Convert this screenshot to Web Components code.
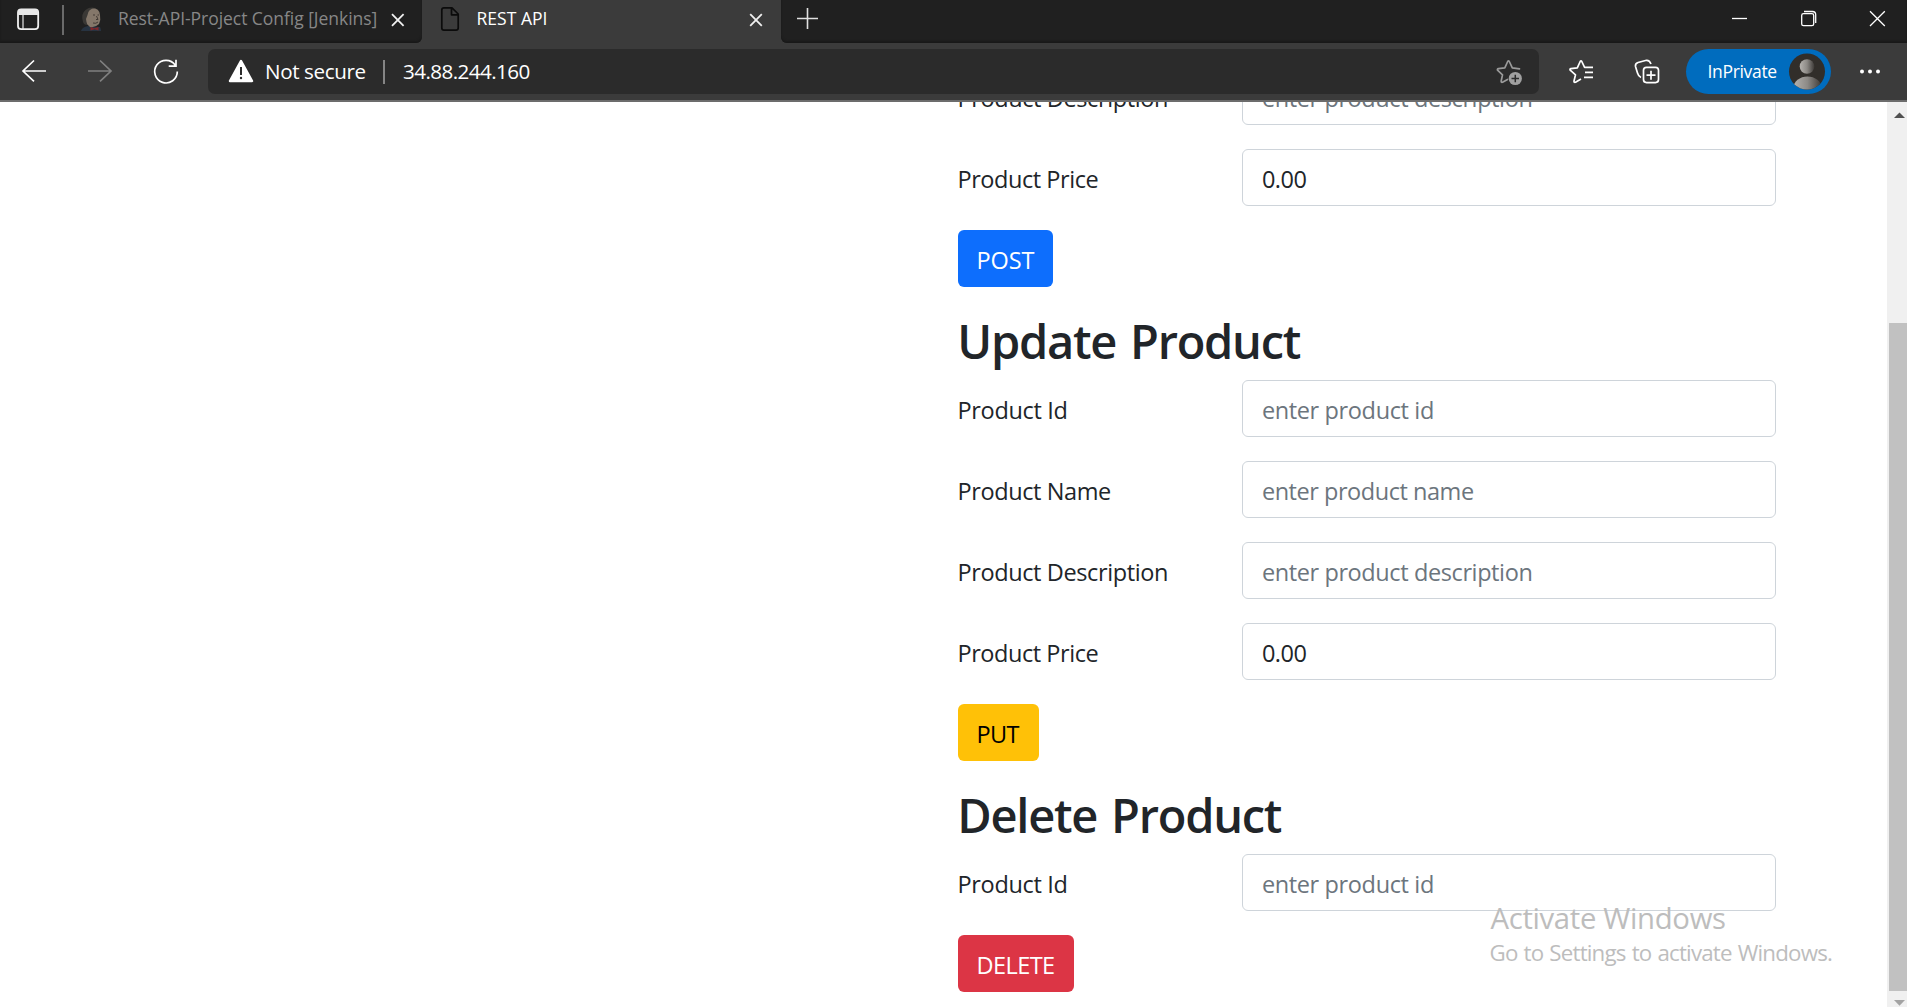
<!DOCTYPE html>
<html lang="en">
<head>
<meta charset="utf-8">
<title>REST API</title>
<style>
  html, body { margin: 0; height: 100%; overflow: hidden; }
  body { font-family: "Open Sans", "Noto Sans", sans-serif; background: #fff; color: #212529; }
</style>
</head>
<body>
<browser-window>
  <browser-tabs slot="tabs"></browser-tabs>
  <browser-toolbar slot="toolbar"></browser-toolbar>
  <product-page>
    <form-row label="Product Description" lw="207.5" value="enter product description" vw="268.5" hint></form-row>
    <form-row label="Product Price" lw="138" value="0.00" vw="43.5"></form-row>
    <action-button label="POST" lw="56" style="--bg:#0d6efd;--fg:#fff;--w:95px"></action-button>
    <section-title label="Update Product" lw="339.5"></section-title>
    <form-row label="Product Id" lw="107" value="enter product id" vw="170" hint></form-row>
    <form-row label="Product Name" lw="150.5" value="enter product name" vw="210" hint></form-row>
    <form-row label="Product Description" lw="207.5" value="enter product description" vw="268.5" hint></form-row>
    <form-row label="Product Price" lw="138" value="0.00" vw="43.5"></form-row>
    <action-button label="PUT" lw="41" style="--bg:#ffc107;--fg:#000;--w:81px"></action-button>
    <section-title label="Delete Product" lw="320.5"></section-title>
    <form-row label="Product Id" lw="107" value="enter product id" vw="170" hint></form-row>
    <action-button label="DELETE" lw="75.5" style="--bg:#dc3545;--fg:#fff;--w:116px"></action-button>
  </product-page>
  <scroll-bar slot="scroll"></scroll-bar>
  <activation-note slot="note"></activation-note>
</browser-window>

<script>
const pen = document.createElement('canvas').getContext('2d');

function define(name, html, setup) {
  customElements.define(name, class extends HTMLElement {
    connectedCallback() {
      if (this.shadowRoot) return;
      const root = this.attachShadow({ mode: 'open' });
      root.innerHTML = typeof html === 'function' ? html(this) : html;
      if (setup) setup(this, root);
    }
  });
}

/* A single line of text whose tracking is set so its glyphs span `ink` pixels;
   `space` widens each word gap by that many pixels. */
define('fit-text', el => `
  <style>:host{display:block;flex:none;font-kerning:none}span{display:block;white-space:pre}</style>
  <span>${el.getAttribute('text')}</span>`, (el, root) => {
  const span = root.querySelector('span');
  const cs = getComputedStyle(el);
  const ink = parseFloat(el.getAttribute('ink'));
  const space = parseFloat(el.getAttribute('space') || 0);
  const text = el.getAttribute('text');
  pen.font = `${cs.fontWeight} ${cs.fontSize} ${cs.fontFamily}`;
  pen.fontKerning = 'none';
  const m = pen.measureText(text);
  const natural = m.actualBoundingBoxRight + m.actualBoundingBoxLeft + space * (text.split(' ').length - 1);
  span.style.letterSpacing = ((ink - natural) / (text.length - 1)).toFixed(3) + 'px';
  span.style.wordSpacing = space + 'px';
  span.style.marginLeft = m.actualBoundingBoxLeft.toFixed(2) + 'px';
  el.style.width = ink + 'px';
});

define('form-row', el => `
  <style>
    :host{display:grid;grid-template-columns:284px 534px;height:57px;margin-bottom:24px;font-size:23.5px;line-height:36px}
    .label{display:flex;align-items:center;padding:2px 0 0 1.5px}
    .field{display:flex;align-items:center;box-sizing:border-box;border:1px solid #ced4da;border-radius:6px;padding:2px 0 0 19.9px;background:#fff}
    .hint{color:#6c757d}
  </style>
  <div class="label"><fit-text text="${el.getAttribute('label')}" ink="${el.getAttribute('lw')}"></fit-text></div>
  <div class="field ${el.hasAttribute('hint') ? 'hint' : ''}"><fit-text text="${el.getAttribute('value')}" ink="${el.getAttribute('vw')}"></fit-text></div>`);

define('action-button', el => `
  <style>
    :host{display:block;margin-bottom:24px}
    button{all:unset;display:flex;align-items:center;box-sizing:border-box;width:var(--w);height:57px;padding:3px 0 0 20.5px;border-radius:6px;background:var(--bg);color:var(--fg);font-size:23.5px;line-height:36px}
  </style>
  <button><fit-text text="${el.getAttribute('label')}" ink="${el.getAttribute('lw')}"></fit-text></button>`);

define('section-title', el => `
  <style>
    :host{display:flow-root;height:69px}
    h2{margin:0;padding:1px 0 0 3.3px;font-size:47px;font-weight:600;line-height:58px}
  </style>
  <h2><fit-text text="${el.getAttribute('label')}" ink="${el.getAttribute('lw')}" space="3"></fit-text></h2>`);

define('product-page', `
  <style>
    :host{display:block;height:100%;overflow:hidden;background:#fff}
    main{margin:-34px 0 0 958px;width:818px}
  </style>
  <main><slot></slot></main>`);

define('scroll-bar', `
  <style>
    :host{display:flex;flex-direction:column;width:20px;height:100%;background:#f0f0f0}
    .thumb{margin:205px 0 0 2px;height:668px;background:#c1c1c1}
    svg{display:block;flex:none}
  </style>
  <svg width="20" height="16" viewBox="0 0 20 16"><path d="M7 16L12.5 10.5L18 16Z" fill="#505050"/></svg>
  <div class="thumb"></div>
  <svg width="20" height="16" viewBox="0 0 20 16"><path d="M7 9L12.5 14.8L18 9Z" fill="#a3a3a3"/></svg>`);

define('activation-note', `
  <style>
    :host{display:block;color:#bdbdbd}
    .a{font-size:29.3px;line-height:40px}
    .b{font-size:22.3px;line-height:30px}
  </style>
  <fit-text class="a" text="Activate Windows" ink="234.5"></fit-text>
  <fit-text class="b" text="Go to Settings to activate Windows." ink="341.5" space="1"></fit-text>`);

define('browser-window', `
  <style>
    :host{display:grid;grid-template-rows:43px 59px 905px;height:1007px;width:1907px;overflow:hidden;position:relative}
    .view{display:grid;grid-template-columns:1887px 20px;min-height:0}
    .note{position:absolute;left:1490.5px;top:898px}
  </style>
  <slot name="tabs"></slot>
  <slot name="toolbar"></slot>
  <div class="view"><slot></slot><slot name="scroll"></slot></div>
  <div class="note"><slot name="note"></slot></div>`);

define('browser-tabs', `
  <style>
    :host{display:flex;height:43px;background:#3b3b3b;font-size:17.5px;line-height:37px;color:#fff}
    .dark{background:#202020;height:43px;display:flex;box-sizing:border-box;box-shadow:inset 0 -2px 2px #191919}
    .left{width:422px;border-radius:0 0 6px 0}
    .active{width:359px;display:flex}
    .right{flex:1;border-radius:0 0 0 6px}
    svg{display:block;flex:none}
    .idle{color:#878787}
  </style>
  <div class="dark left">
    <svg width="118" height="43" viewBox="0 0 118 43">
      <rect x="18" y="9.3" width="20.2" height="19.8" rx="3.2" fill="none" stroke="#f0f0f0" stroke-width="1.8"/>
      <path d="M18 15V12Q18 9 21 9H35Q38 9 38 12V15Z" fill="#e8e8e8"/>
      <path d="M23 15V29" stroke="#e8e8e8" stroke-width="1.2"/>
      <path d="M63 5V35" stroke="#6a6a6a" stroke-width="2"/>
      <path d="M81 31Q82 27 88 26L100 27Q101 29 101 31Z" fill="#273341"/>
      <path d="M85 15Q86 8.500 92 8Q99.500 8 100 15Q101 20 99 24Q95 28 90 27Q86 24 85 20Z" fill="#84776a"/>
      <path d="M83 22Q80.500 14 85.500 10Q90 6.500 95 8Q88 9 87.500 15L86 19L87 25Q84 25 83 22Z" fill="#3a3835"/>
      <path d="M93 15H95M97.500 15H99M93 23Q96 24 98 22M96.500 16L98 19.500H96" stroke="#423a34" fill="none"/>
      <path d="M90.500 27L94.500 28.300L98.500 27V30.500L94.500 29.300L90.500 30.500Z" fill="#80262a"/>
    </svg>
    <fit-text class="idle" style="margin-left:1px" text="Rest-API-Project Config [Jenkins]" ink="257.5"></fit-text>
    <svg width="36" height="43" viewBox="385 0 36 43" style="margin-left:8.500px"><path d="M392 14.200L403.600 25.800M403.600 14.200L392 25.800" stroke="#f0f0f0" stroke-width="1.800"/></svg>
  </div>
  <div class="active">
    <svg width="55" height="43" viewBox="422 0 55 43"><path d="M444 7.800H452L458.200 14V28Q458.200 30.200 456 30.200H444Q441.800 30.200 441.800 28V10Q441.800 7.800 444 7.800ZM451.500 8V14.800H458" fill="none" stroke="#0b0b0b" stroke-width="1.700" stroke-linejoin="round"/></svg>
    <fit-text style="margin-left:.500px" text="REST API" ink="69"></fit-text>
    <svg width="36" height="43" viewBox="738 0 36 43" style="margin-left:191.500px"><path d="M750.200 14.200L761.800 25.800M761.800 14.200L750.200 25.800" stroke="#f0f0f0" stroke-width="1.800"/></svg>
  </div>
  <div class="dark right">
    <svg width="1126" height="43" viewBox="781 0 1126 43" fill="none" stroke="#fff">
      <path d="M797 18.500H818M807.500 8V29" stroke="#e0e0e0" stroke-width="1.600"/>
      <path d="M1732 18.500H1747" stroke-width="1.300"/>
      <rect x="1801.700" y="13.700" width="12" height="12" rx="1.800" stroke-width="1.300"/>
      <path d="M1804 11.500H1812.500Q1815.700 11.500 1815.700 14.700V23" stroke-width="1.300"/>
      <path d="M1870 11.200L1884.800 26M1884.800 11.200L1870 26" stroke-width="1.300"/>
    </svg>
  </div>`);

define('browser-toolbar', `
  <style>
    :host{display:flex;box-sizing:border-box;height:59px;border-bottom:2px solid #6c6c6c;background:#3b3b3b;color:#fff;padding-top:6px}
    svg{display:block;flex:none}
    .bar{width:1331px;height:45px;box-sizing:border-box;border-radius:7px;background:#2b2b2b;display:flex;align-items:center;font-size:20.600px;line-height:30px}
    .bar fit-text,.pill fit-text{padding-bottom:2px}
    .sep{width:2px;height:24px;background:#858585;margin:0 18px 0 17.500px}
    .pill{width:145px;height:45px;border-radius:23px;background:#006cbe;display:flex;align-items:center;font-size:17.500px;line-height:26px}
  </style>
  <svg width="208" height="45" viewBox="0 49 208 45" fill="none" stroke="#fff" stroke-width="1.700">
    <path d="M34 60.500L23 71L34 81.300M22.500 71H46"/>
    <path d="M100 60.500L111 71L100 81.300M88 71H111.500" stroke="#808080"/>
    <path d="M175.300 65.200A11.300 11.300 0 1 0 177.300 71.500M176 59.700V66.200H168.700"/>
  </svg>
  <div class="bar">
    <svg width="58" height="45" viewBox="208 49 58 45"><path d="M241 61L252 81H230Z" fill="#fff" stroke="#fff" stroke-width="2.500" stroke-linejoin="round"/><path d="M241 67V75" stroke="#2b2b2b" stroke-width="2"/><circle cx="241" cy="78" r="1.200" fill="#2b2b2b"/></svg>
    <fit-text style="margin-left:1px" text="Not secure" ink="98.500"></fit-text>
    <div class="sep"></div>
    <fit-text text="34.88.244.160" ink="126.500"></fit-text>
    <svg width="49" height="45" viewBox="1490 49 49 45" style="margin-left:auto"><path d="M1507.500 79.500L1502.500 82.300Q1501 82.700 1501.200 81L1502.500 74.800L1497.500 70.200Q1497 69 1498.500 68.700L1504.800 67.800L1507.700 61.500Q1508.500 60.300 1509.300 61.500L1512.300 67.800L1519.500 68.800" fill="none" stroke="#9a9a9a" stroke-width="1.700" stroke-linejoin="round" stroke-linecap="round"/><circle cx="1515.300" cy="78.500" r="6.600" fill="#a0a0a0"/><path d="M1511.500 78.500H1519M1515.300 74.700V82.300" stroke="#2b2b2b" stroke-width="1.500"/></svg>
  </div>
  <svg width="147" height="45" viewBox="1539 49 147 45" fill="none" stroke="#fff" stroke-width="1.700" stroke-linejoin="round">
    <path d="M1581 79L1575.500 82.200Q1573.800 82.700 1574 81L1575.500 74.800L1570.200 70.200Q1569.500 69 1571 68.700L1577.300 67.800L1580.200 61.500Q1581 60.300 1581.800 61.500L1584.600 67.300H1593M1585 72.300H1593M1584 77.300H1593"/>
    <rect x="1643.500" y="67.300" width="15" height="15.300" rx="3"/><path d="M1651 70.700V79.700M1646.500 75.200H1655.500"/>
    <path d="M1641 77.500Q1638.500 76.500 1637.500 73L1635.500 66.500Q1635 63.500 1638 62.500L1646.500 60.300Q1649.500 60 1651 64"/>
  </svg>
  <div class="pill">
    <fit-text style="margin-left:22.500px" text="InPrivate" ink="67.800"></fit-text>
    <svg width="38" height="38" viewBox="1788 53 38 38" style="margin-left:11.700px">
      <defs><linearGradient id="g"><stop offset="0" stop-color="#b5b2ae"/><stop offset=".5" stop-color="#8d8a86"/><stop offset="1" stop-color="#3d3a37"/></linearGradient><clipPath id="c"><circle cx="1807" cy="71.500" r="18"/></clipPath></defs>
      <circle cx="1807" cy="71.500" r="18" fill="#312e2a"/>
      <g clip-path="url(#c)" fill="url(#g)"><circle cx="1807" cy="66.500" r="7.300"/><ellipse cx="1807.500" cy="88" rx="14" ry="11.500"/></g>
    </svg>
  </div>
  <svg width="76" height="45" viewBox="1831 49 76 45" fill="#fff"><circle cx="1862" cy="71.500" r="2"/><circle cx="1870" cy="71.500" r="2"/><circle cx="1878" cy="71.500" r="2"/></svg>`);
</script>
</body>
</html>
